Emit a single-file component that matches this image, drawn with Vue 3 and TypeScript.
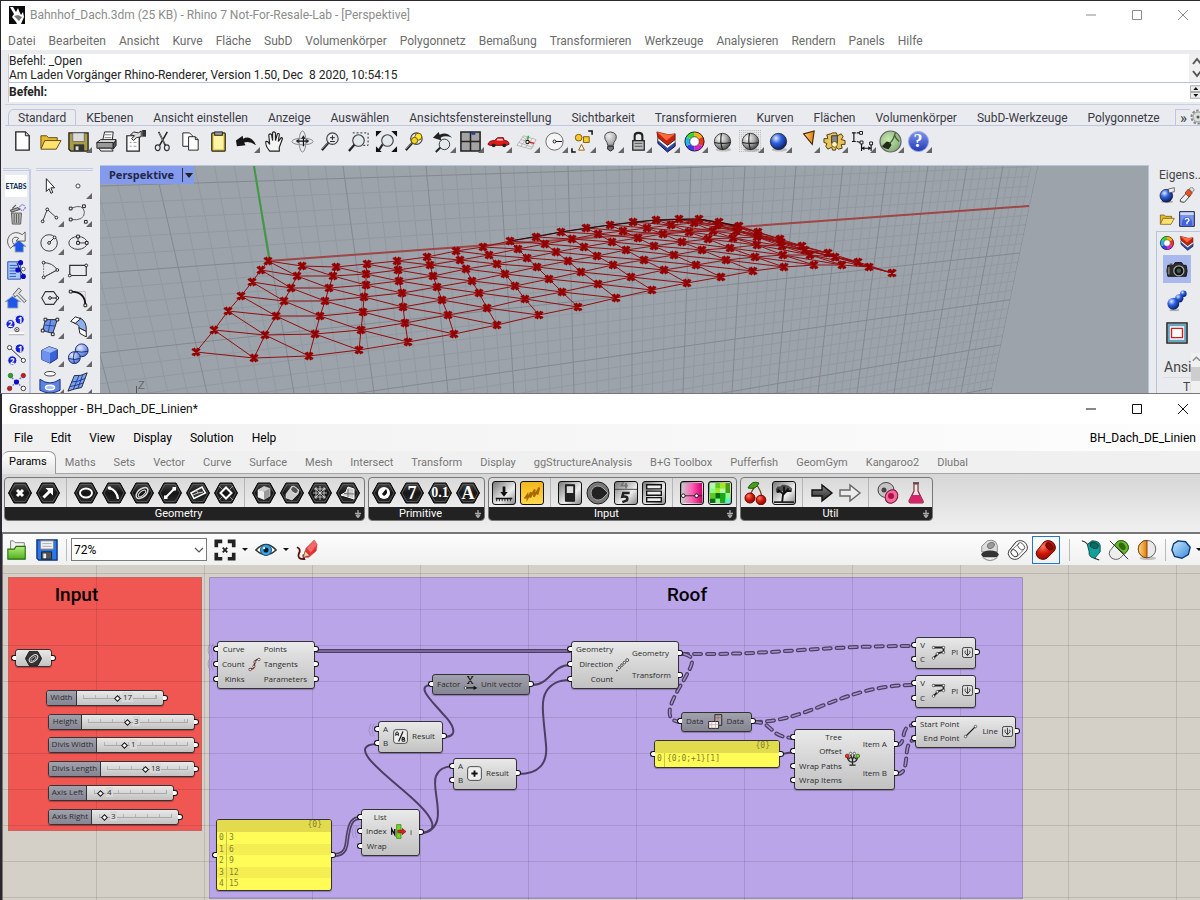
<script setup lang="ts">
import { ref } from 'vue'

type Tool = { id: string; label: string; fly?: boolean }
type Slider = { name: string; x: number; y: number; w: number; label: number; from: number; to: number; knob: number; value: string }
type GhNode = {
  id: string; x: number; y: number; w: number; h: number
  inputs: string[]; outputs: string[]; icon: string; dark?: boolean; graft?: boolean
}

const menus = ['Datei', 'Bearbeiten', 'Ansicht', 'Kurve', 'Fläche', 'SubD', 'Volumenkörper', 'Polygonnetz', 'Bemaßung', 'Transformieren', 'Werkzeuge', 'Analysieren', 'Rendern', 'Panels', 'Hilfe']
const rhinoTabs = ['Standard', 'KEbenen', 'Ansicht einstellen', 'Anzeige', 'Auswählen', 'Ansichtsfenstereinstellung', 'Sichtbarkeit', 'Transformieren', 'Kurven', 'Flächen', 'Volumenkörper', 'SubD-Werkzeuge', 'Polygonnetze']
const ghMenus = ['File', 'Edit', 'View', 'Display', 'Solution', 'Help']
const ghTabs = ['Params', 'Maths', 'Sets', 'Vector', 'Curve', 'Surface', 'Mesh', 'Intersect', 'Transform', 'Display', 'ggStructureAnalysis', 'B+G Toolbox', 'Pufferfish', 'GeomGym', 'Kangaroo2', 'Dlubal']
const command = ref('')
const zoom = ref('72%')

const glass = '<path d="M10 13L3 21" stroke="#222" stroke-width="2.4"/><path d="M9 13.500L3 20" stroke="#aaa" stroke-width=".8"/><circle cx="14" cy="9" r="6" fill="#e4e9ee" stroke="#444" stroke-width="1.2"/><path d="M10.500 8Q11.500 5 14.500 5" fill="none" stroke="#fff" stroke-width="1.200"/>'
const ball = (c: string) => `<ellipse cx="13" cy="20.500" rx="8" ry="2" fill="#0003"/><circle cx="12" cy="12" r="8.500" fill="url(#${c})" stroke="#222" stroke-width=".8"/>`
const tube = (a: string, b: string, s: string) => `<path d="M2 13L10 3Q15 0 20 4Q24 9 21 13L13 21Q8 24 3 20Q0 16 2 13Z" fill="${a}" stroke="${s}"/><ellipse cx="15.500" cy="8" rx="3" ry="4.500" transform="rotate(-42 15.500 8)" fill="${b}" stroke="${s}" stroke-width=".8"/>`

const art: Record<string, string> = {
  new: '<path d="M5 2H15L19 6V21H5Z" fill="#fdfdfd" stroke="#222" stroke-width="1.4"/><path d="M15 2V6H19" fill="#ccc" stroke="#222"/>',
  open: '<path d="M2 19V6H8L10 8H19V11" fill="#e8b72c" stroke="#5f4a10"/><path d="M2 20L6 11H23L18 20Z" fill="#ffe36e" stroke="#5f4a10"/>',
  save: '<path d="M2 3H22V22H4L2 20Z" fill="#a89c45" stroke="#222" stroke-width="1.400"/><path d="M6 3H18V12H6Z" fill="#dcdcdc" stroke="#555" stroke-width=".7"/><path d="M7 15H18V22H7Z" fill="#333"/><path d="M9 17H12V21H9Z" fill="#ddd"/>',
  print: '<path d="M8 11L10 2H19L18 11" fill="#fff" stroke="#222"/><path d="M10 5H17M10 8H17" stroke="#777"/><path d="M2 13L6 10H22L20 14H2Z" fill="#ddd" stroke="#222"/><path d="M2 13H19V19H2Z" fill="#999" stroke="#222"/><path d="M19 14L22 11V16L19 20Z" fill="#555" stroke="#222"/><path d="M4 19H17L19 22H6Z" fill="#eee" stroke="#222"/>',
  props: '<path d="M4 6H17V22H4Z" fill="#fafafa" stroke="#222" stroke-width="1.300"/><path d="M7 13H9M11 13H14M7 17H9M11 17H14" stroke="#999"/><path d="M8 5L11 2L16 3L19 1V7L14 8L11 11L9 9L12 6Z" fill="#ddd" stroke="#222"/><path d="M20 0H24V7H20Z" fill="#333"/>',
  cut: '<path d="M8 2L15 16M17 2L9 16" stroke="#222" stroke-width="1.600"/><path d="M8.500 3L14 14" stroke="#bbb" stroke-width=".6"/><ellipse cx="7" cy="18.500" rx="2.500" ry="3" fill="none" stroke="#333" stroke-width="1.200"/><ellipse cx="16.500" cy="18.500" rx="2.500" ry="3" fill="none" stroke="#333" stroke-width="1.200"/>',
  copy: '<path d="M4 3H11L14 6V17H4Z" fill="#fff" stroke="#222"/><path d="M10 7H17L20 10V21H10Z" fill="#fff" stroke="#222"/><path d="M17 7V10H20" fill="none" stroke="#222"/>',
  paste: '<rect x="5" y="3" width="14" height="19" rx="1" fill="#e8c93c" stroke="#222" stroke-width="1.300"/><path d="M7 6H17V20H7Z" fill="#fff3a8"/><rect x="8" y="2" width="8" height="3.500" fill="#999" stroke="#222"/>',
  undo: '<path d="M1 11L8 6L8.500 9Q17 5 22 16Q15 11 9.500 13L11 16L2 17Z" fill="#161616"/>',
  hand: '<path d="M7 22Q2 16 3 12Q5 11 7 15L6 5Q8 3 9 5L10 11V3Q11 1 13 3V11L15 4Q17 3 17 5L16 12L19 8Q21 8 20 10L17 18V22Z" fill="#f5f5f5" stroke="#222" stroke-width="1.200"/>',
  spin: '<ellipse cx="12" cy="12" rx="11" ry="3.500" fill="none" stroke="#888"/><ellipse cx="12" cy="12" rx="3.500" ry="11" fill="none" stroke="#888"/><path d="M7 11.500H17M13 7V17" stroke="#111" stroke-width="1.300"/><path d="M10.500 9H15L13 5.500ZM16 9V14L19 11.500ZM8 9V14L5 11.500Z" fill="#222"/>',
  zoomd: glass + '<path d="M11.500 8H16.500M14 5.500V10.500M11.500 12H16.500" stroke="#222"/>',
  zoomw: '<path d="M6 3H22V16H17" fill="none" stroke="#222" stroke-dasharray="2 2"/><path d="M8 15L2 22" stroke="#222" stroke-width="2.400"/><circle cx="12" cy="11" r="6" fill="#e4e9ee" stroke="#444" stroke-width="1.200"/>',
  zoome: '<path d="M8 15L4 21" stroke="#222" stroke-width="2.200"/><circle cx="13" cy="11" r="6" fill="#e4e9ee" stroke="#444" stroke-width="1.200"/><path d="M1 1H7L1 7ZM23 1H17L23 7ZM1 23V17L7 23ZM23 23H17L23 17Z" fill="#111"/>',
  zooms: glass + '<circle cx="16" cy="7" r="3.600" fill="#ffe435" stroke="#665a00"/><circle cx="12" cy="11" r="3.300" fill="#f5d51e" stroke="#665a00"/>',
  zoomu: '<path d="M10 18L5 23" stroke="#222" stroke-width="2"/><circle cx="14" cy="15" r="5.500" fill="#e4e9ee" stroke="#333"/><path d="M2 8L8 2L9 5Q16 1 22 8Q15 5 10 8L11 11Z" fill="#222"/>',
  four: '<path d="M2 2H22V22H2Z" fill="#a3a3a3" stroke="#222" stroke-width="1.600"/><path d="M12 2V22M2 12H22" stroke="#222" stroke-width="1.600"/><path d="M13 3H17V5H13Z" fill="#1b3fae"/>',
  car: '<path d="M1 15Q2 11 8 11L11 8H17L18 11Q23 11 23 15L20 16H3Z" fill="#e21919" stroke="#770909"/><path d="M11 9H16L17 11H10Z" fill="#ffd0d0"/><circle cx="7" cy="16" r="2" fill="#222"/><circle cx="18" cy="16" r="2" fill="#222"/>',
  cplane: '<path d="M2 16L9 6L22 10L17 20ZM4 13L18 18M6 10L20 14M6 17L13 7M11 18L18 9M8 7L20 17" fill="#eee" stroke="#aaa" stroke-width=".8"/><path d="M13 12L20 14" stroke="#d22" stroke-width="1.500"/><path d="M13 12L14 6" stroke="#2a2" stroke-width="1.500"/><path d="M11.500 11H14.500V14H11.500Z" fill="#fff" stroke="#111"/>',
  circ: '<circle cx="12" cy="12" r="9" fill="#f5f5f5" stroke="#666"/><path d="M12 12H20" stroke="#111"/><circle cx="12" cy="12" r="1.500" fill="#fff" stroke="#111"/>',
  sel: '<path d="M18 1H22V5M5 23H1V19" fill="none" stroke="#111" stroke-width="1.600"/><circle cx="8" cy="8" r="3.500" fill="#ffc92e" stroke="#7a5a00"/><path d="M13 7H19V13H13Z" fill="#ffc92e" stroke="#7a5a00"/><path d="M11 15L14 21H8Z" fill="#fff" stroke="#9a5a00"/>',
  bulb: '<path d="M9 16Q9 13 6.500 10Q4 3 12 2Q20 3 17.500 10Q15 13 15 16Z" fill="url(#bulbg)" stroke="#444"/><path d="M9 17H15V20L12 22L9 20Z" fill="#777" stroke="#222"/>',
  lock: '<path d="M8 11V6Q8 3 12 3Q16 3 16 6V11" fill="none" stroke="#222" stroke-width="2.200"/><path d="M6 11H18V21H6Z" fill="#bdbdbd" stroke="#222" stroke-width="1.300"/><path d="M8 14H16M8 17H16" stroke="#555"/>',
  layer: '<path d="M3 9L13 18L21 13V17L13 23L3 14Z" fill="#2747b7" stroke="#112"/><path d="M3 7L13 16L21 10V13L13 19L3 11Z" fill="#fff" stroke="#445" stroke-width=".7"/><path d="M2 2L14 5L21 4V10L13 16L3 8Z" fill="#c32410" stroke="#5b0f00" stroke-width=".8"/><path d="M2 2L14 5L21 4L12 11Z" fill="#ff6a3a"/>',
  wheel: '<g fill="none" stroke-width="5"><path d="M12 4.500A7.500 7.500 0 0 1 18.500 8.200" stroke="#ffb000"/><path d="M18.500 8.200A7.500 7.500 0 0 1 18.500 15.800" stroke="#f4321c"/><path d="M18.500 15.800A7.500 7.500 0 0 1 12 19.500" stroke="#e020d0"/><path d="M12 19.500A7.500 7.500 0 0 1 5.500 15.800" stroke="#3a3af0"/><path d="M5.500 15.800A7.500 7.500 0 0 1 5.500 8.200" stroke="#19b8e8"/><path d="M5.500 8.200A7.500 7.500 0 0 1 12 4.500" stroke="#3bd62b"/></g><circle cx="12" cy="12" r="10" fill="none" stroke="#222"/><circle cx="12" cy="12" r="5" fill="#fff" stroke="#333" stroke-width=".8"/>',
  ball: ball('silver') + '<path d="M3.500 13Q12 15 20.500 13M11 3.500Q9 12 12 20.500" stroke="#222" stroke-width="1.200" fill="none"/>',
  ballg: '<path d="M0 0H24V24H0Z" fill="url(#dots)"/>' + ball('silver') + '<path d="M3.500 13Q12 15 20.500 13M11 3.500Q9 12 12 20.500" stroke="#222" stroke-width="1.200" fill="none"/>',
  blue: ball('blueg'),
  cone: '<path d="M9 4L20 1L18 15Z" fill="url(#orange)" stroke="#4a2a00" stroke-width="1.200"/>',
  gear: '<path d="M10 3H14L15 6L19 4L21 7L19 10L23 11V15L19 15L20 19L16 20L14 18L13 21H10L9 18L5 20L3 17L4 14L1 13V9L5 9L4 5L8 4Z" fill="#e9c45a" stroke="#4f3b0a"/><path d="M9 6H15V14H9Z" fill="#888" stroke="#333"/><circle cx="12" cy="15" r="3" fill="#fff4c4" stroke="#6b5210"/>',
  dim: '<path d="M3 3V12M1 3H5M1 12H5M6 3H11M11 14V22M21 14V22M11 19H21M6 12L10 13" fill="none" stroke="#111" stroke-width="1.200"/><path d="M9 1.500H12V4.500H9ZM9.500 11.500H12.500V14.500H9.500ZM19.500 12.500H22.500V15.500H19.500Z" fill="#fff" stroke="#111"/><path d="M11 19L14 17V21ZM21 19L18 17V21Z" fill="#111"/>',
  hop: '<circle cx="12" cy="12" r="11" fill="url(#greeng)" stroke="#666" stroke-width="1.200"/><path d="M3 17L8 12L12 13L13 16L10 20L6 19Z" fill="#1d2b18"/><path d="M11 14Q15 11 17 3M16 5Q18 10 21 12" fill="none" stroke="#41623a" stroke-width="1.400"/>',
  help: '<circle cx="12" cy="12" r="10.500" fill="url(#helpg)" stroke="#9aa6e0"/>',
  etabs: '<path d="M0 0H24V24H0Z" fill="#fff"/>',
  trash: '<path d="M6 8L14 5L16 7L7 10ZM8 6L12 2" fill="#aaa" stroke="#555" stroke-width="1.200"/><path d="M7 11H18L17 23H8Z" fill="#bbb" stroke="#555"/><path d="M10 12V22M12.500 12V22M15 12V22" stroke="#555"/><circle cx="19" cy="5" r="3" fill="none" stroke="#33c" stroke-dasharray="1.500 1"/>',
  back: '<path d="M15 10L23 17H20V23H11V17H7Z" fill="#1e56e8" stroke="#9ab"/><path d="M19 4Q11 -1 5 5Q0 12 6 19L10 15Q6 10 10 7Q12 6 15 8L12 11H22V1Z" fill="#eee" stroke="#555"/>',
  doc: '<path d="M3 3H15L17 7V22H3Z" fill="#a9c8ff" stroke="#2646a5"/><path d="M5 7H13M5 10H13M5 13H13M5 16H12M5 19H12" stroke="#2a50b8"/><path d="M13 4L16 12L20 18" stroke="#222"/><circle cx="17" cy="4" r="2.800" fill="#0a0ac8"/><circle cx="14" cy="12" r="2.800" fill="#0a0ac8"/><circle cx="20" cy="19" r="2.800" fill="#0a0ac8"/><circle cx="20" cy="11" r="2" fill="#fff" stroke="#555"/>',
  build: '<path d="M8 10L17 16H14V23H3V16H0Z" fill="#1e56e8" stroke="#9ab"/><path d="M9 8L15 1L18 4L15 7L23 15L21 17L13 9L11 11Z" fill="#ddd" stroke="#555"/>',
  seq: '<circle cx="16" cy="5" r="5" fill="#1420d0" stroke="#fff"/><circle cx="6" cy="10" r="5" fill="#1420d0" stroke="#fff"/><circle cx="13" cy="16" r="2.300" fill="#fff" stroke="#333"/><circle cx="13" cy="16" r=".8"/><path d="M4 20H21" stroke="#fff" stroke-width="2"/><path d="M4 21.500H21" stroke="#aaa"/>',
  seq2: '<path d="M4 4L20 19" stroke="#222"/><circle cx="5" cy="5" r="2.300" fill="#fff" stroke="#333"/><circle cx="20" cy="19" r="2.300" fill="#fff" stroke="#333"/><circle cx="16" cy="6" r="5" fill="#1420d0" stroke="#fff"/><circle cx="8" cy="19" r="5" fill="#1420d0" stroke="#fff"/>',
  nodes: '<path d="M5 5L20 19M20 5L5 19" stroke="#6a7ad8" stroke-dasharray="2 1.500" stroke-width="1.500"/><circle cx="12.500" cy="12" r="2.800" fill="#0a0ac8"/><circle cx="6" cy="5" r="2.500" fill="#1cae1c" stroke="#333" stroke-width=".6"/><circle cx="20" cy="5" r="2.500" fill="#d11" stroke="#333" stroke-width=".6"/><circle cx="5" cy="19" r="2.500" fill="#d11" stroke="#333" stroke-width=".6"/><circle cx="20" cy="19" r="2.500" fill="#fff" stroke="#333"/>',
  arrow: '<path d="M8 4L17 14L13 14L15 19L13 20L11 15L8 18Z" fill="#fff" stroke="#111"/>',
  point: '<circle cx="12" cy="12" r="2.200" fill="#fff" stroke="#333"/>',
  pline: '<path d="M4 20L9 7L19 16" fill="none" stroke="#333"/><g fill="#fff" stroke="#111"><circle cx="4" cy="20" r="1.500"/><circle cx="9" cy="7" r="1.500"/><circle cx="19" cy="16" r="1.500"/></g>',
  curve: '<path d="M4 6Q18 0 19 10Q19 20 4 18" fill="none" stroke="#555"/><g fill="#fff" stroke="#111"><path d="M2.500 4.500H5.500V7.500H2.500ZM2.500 16.500H5.500V19.500H2.500ZM17 2H20V5H17ZM19 19H22V22H19Z"/></g>',
  circle2: '<circle cx="11" cy="13" r="9" fill="none" stroke="#333"/><path d="M11 13L17 7" stroke="#111"/><g fill="#fff" stroke="#111"><circle cx="11" cy="13" r="1.500"/><circle cx="17" cy="7" r="1.500"/></g>',
  ellipse: '<ellipse cx="12" cy="13" rx="10" ry="7" fill="none" stroke="#333"/><path d="M12 6V13H22" fill="none" stroke="#333"/><g fill="#fff" stroke="#111"><path d="M10.500 4.500H13.500V7.500H10.500ZM10.500 11.500H13.500V14.500H10.500ZM20 11.500H23V14.500H20Z"/></g>',
  arc: '<path d="M5 4V20M5 20L19 12" stroke="#777" stroke-dasharray="2 1" fill="none"/><path d="M5 4Q15 4 20 12L5 20" fill="none" stroke="#333"/><g fill="#fff" stroke="#111"><circle cx="5" cy="4" r="1.500"/><circle cx="20" cy="12" r="1.500"/><circle cx="5" cy="20" r="1.500"/></g>',
  rect: '<path d="M3 7H21V18H3Z" fill="none" stroke="#333" stroke-width="1.300"/><circle cx="21" cy="7" r="1.500" fill="#fff" stroke="#111"/><circle cx="3" cy="18" r="1.500" fill="#fff" stroke="#111"/>',
  hex: '<path d="M7 5H16L21 12L16 19H7L3 12Z" fill="none" stroke="#333" stroke-width="1.200"/><path d="M12 12H20" stroke="#111"/><circle cx="12" cy="12" r="1.500" fill="#fff" stroke="#111"/><circle cx="20" cy="12" r="1.500" fill="#fff" stroke="#111"/>',
  fillet: '<path d="M4 5H20V21" fill="none" stroke="#bbb"/><path d="M4 5Q20 5 20 20" fill="none" stroke="#111" stroke-width="2"/><g fill="#fff" stroke="#111"><path d="M2.500 3.500H5.500V6.500H2.500ZM18.500 18.500H21.500V21.500H18.500Z"/></g>',
  srf: '<path d="M7 5H20L15 20L4 17Z" fill="#6f93e8" stroke="#222"/><path d="M6 11L18 12M13 5L10 19" stroke="#26418f"/><g fill="#fff" stroke="#111"><path d="M5.500 3.500H8.500V6.500H5.500ZM18.500 3.500H21.500V6.500H18.500ZM2.500 15.500H5.500V18.500H2.500ZM13.500 19.500H16.500V22.500H13.500Z"/></g>',
  patch: '<path d="M8 9L14 3Q22 7 21 18L13 14Q14 11 8 9Z" fill="#8fb0f0" stroke="#222"/><path d="M4 7L9 2L15 4L9 9Z" fill="#fff" stroke="#111"/><path d="M13 14L21 18V24L14 20Z" fill="#fff" stroke="#111"/>',
  box: '<path d="M3 8L11 4L20 7V17L12 22L3 18Z" fill="#3c62d8" stroke="#16276d"/><path d="M3 8L11 4L20 7L12 11Z" fill="#9ab7f8"/><path d="M12 11V22L3 18V8Z" fill="#6e92ee"/>',
  balls: '<circle cx="16" cy="8" r="7" fill="url(#bluel)" stroke="#16276d"/><circle cx="8" cy="16" r="6.500" fill="url(#bluel)" stroke="#16276d"/><path d="M2 17Q8 19 14 17M8 9.500Q6 16 8 22M9 9Q16 11 23 9" fill="none" stroke="#16276d"/>',
  sweep: '<ellipse cx="12" cy="3" rx="6" ry="2.500" fill="#fff" stroke="#333"/><path d="M1 9Q12 17 23 9V21Q12 27 1 21Z" fill="#5b83e6" stroke="#16276d"/><ellipse cx="12" cy="18" rx="5" ry="2.500" fill="#aebff5" stroke="#fff" stroke-width="1.500"/>',
  mesh: '<path d="M8 5Q15 6 22 2L16 18Q9 19 1 22Z" fill="#7da2ef" stroke="#222"/><path d="M5 12Q12 12 20 8M3 17Q10 16 18 13M13 5L7 20M17 4L12 19" fill="none" stroke="#1d3687"/>',
  matball: '<ellipse cx="12" cy="22" rx="9" ry="2" fill="#0005"/><circle cx="11" cy="13" r="9.500" fill="url(#blueg)" stroke="#112"/><path d="M14 3L23 1V7L15 9Z" fill="#eee" stroke="#333"/>',
  brush: '<path d="M2 19L12 8L17 13L8 23L2 22Z" fill="#eee" stroke="#333" stroke-width="1.400"/><path d="M9 9L14 3L20 9L15 15Z" fill="#e8531c" stroke="#622"/><path d="M15 3L19 0L23 4L20 8Z" fill="#ddd" stroke="#555"/>',
  qpage: '<path d="M1 1H23V23H1Z" fill="#7b93ea" stroke="#224" stroke-width="1.500"/><path d="M2 2H22V6H2Z" fill="#cfd8ff"/><path d="M4 22Q4 9 12 9Q20 9 20 22" fill="#3f63e0"/><path d="M9 13Q10 11 12 11Q15 11 15 14Q14 16 12 17V20" fill="none" stroke="#fff" stroke-width="2"/>',
  camera: '<path d="M2 8H8L10 5H17L19 8H22Q24 14 22 20H2Q0 14 2 8Z" fill="#2b2b2b" stroke="#111"/><path d="M4 6H7V8H4Z" fill="#555"/><circle cx="14" cy="14" r="5.500" fill="#111" stroke="#aaa" stroke-width="1.300"/><circle cx="14" cy="14" r="2.500" fill="#3b5b4c"/><path d="M3 10V18" stroke="#777" stroke-width="2"/>',
  chain: '<path d="M4 22H14" stroke="#0004" stroke-width="2"/><circle cx="19" cy="4" r="3.500" fill="url(#blueg)"/><circle cx="14.500" cy="9" r="4.500" fill="url(#blueg)"/><circle cx="8" cy="15" r="6.500" fill="url(#blueg)"/>',
  frame: '<path d="M1 1H23V23H1Z" fill="#999" stroke="#222" stroke-width="1.500"/><path d="M3.500 4H20.500V20H3.500Z" fill="#fff" stroke="#35b6e8" stroke-width="1.300"/><path d="M6 7H18V17H6Z" fill="#fff" stroke="#e01818" stroke-width="1.500"/>',
  // Grasshopper hexagon parameters
  x: '<path d="M9 9L15 15M15 9L9 15" stroke="#fff" stroke-width="3"/>',
  vec: '<path d="M7.500 16.500L14 10" stroke="#fff" stroke-width="3"/><path d="M9.500 7H17V14.500Z" fill="#fff"/>',
  oval: '<ellipse cx="12" cy="12" rx="6" ry="4.500" fill="none" stroke="#fff" stroke-width="2"/>',
  arch: '<path d="M7 7Q15 9 16 18" fill="none" stroke="#fff" stroke-width="2.200"/><circle cx="7.500" cy="7" r="1.800" fill="#fff"/>',
  spiral: '<ellipse cx="12" cy="12" rx="7" ry="4" transform="rotate(-40 12 12)" fill="none" stroke="#ddd" stroke-width="1.500"/><ellipse cx="12" cy="12.500" rx="4.500" ry="2" transform="rotate(-40 12 12.500)" fill="none" stroke="#ddd"/>',
  ln: '<path d="M8 16L16 8" stroke="#fff" stroke-width="2"/><path d="M6 14.500H9.500V18H6ZM14.500 6H18V9.500H14.500Z" fill="#fff"/>',
  pln: '<path d="M5 12L16 6L19.500 12L8 17.500Z" fill="#333" stroke="#fff" stroke-width="1.500"/><path d="M7 14L12 12L10 9M12 12L17 11" stroke="#ccc" fill="none"/>',
  dia: '<path d="M12 6.500L17.500 12L12 17.500L6.500 12Z" fill="none" stroke="#fff" stroke-width="2"/><path d="M5 5L19 19M19 5L5 19" stroke="#aaa" stroke-width=".8" stroke-dasharray="5 10"/>',
  cube: '<path d="M6 9L12 5.500L18 7.500V15L12 18.500L6 16Z" fill="#999" stroke="#ccc" stroke-width=".7"/><path d="M6 9L12 10.500V18.500L6 16Z" fill="#eee"/><path d="M6 9L12 5.500L18 7.500L12 10.500Z" fill="#ccc"/>',
  brep: '<path d="M6 13L12 5L19 9L18 13L12 19L6 17Z" fill="#ccc" stroke="#eee" stroke-width=".6"/><ellipse cx="14.500" cy="9" rx="4.200" ry="3" transform="rotate(40 14.500 9)" fill="#555" stroke="#fff" stroke-width=".8"/>',
  msh: '<path d="M6 8H18M5 12H19M6 16H18M8 6V18M12 5V19M16 6V18M7 7L17 17M17 7L7 17" stroke="#ddd" stroke-width=".8"/>',
  twist: '<path d="M12 6L18 8V18L12 16L5 14L10 11Z" fill="#ccc" stroke="#fff"/><path d="M12 8V16M8 12.500L18 13" stroke="#555" stroke-width=".8"/>',
  yin: '<circle cx="12" cy="12" r="6" fill="#fff"/><path d="M10 13L14 8Q17 12 12 15Z" fill="#111"/>',
  // Grasshopper input and util
  slider: '<path d="M12 5V13" stroke="#111" stroke-width="3"/><path d="M8 11H16L12 16Z" fill="#111"/><path d="M3 18H21" stroke="#111" stroke-width="1.500"/><path d="M4 21V18M7 21V18M10 21V18M13 21V18M16 21V18M19 21V18" stroke="#111"/>',
  graph: '<path d="M4 18L7 14L7 18L11 11L10 17L15 8L14 16L20 6L18 14" fill="none" stroke="#a86a00" stroke-width="2"/>',
  toggle: '<path d="M7 3H17V21H7Z" fill="#222" stroke="#111"/><path d="M8.500 4.500H15.500V12H8.500Z" fill="#ddd"/>',
  knob: '<circle cx="12" cy="12" r="11" fill="#777" stroke="#222"/><path d="M12 5A7 7 0 1 0 17 17L22 12L17 7Q15 5 12 5Z" fill="#222" stroke="#aaa"/>',
  digits: '<path d="M9 0L7 4H14M12 1V7" fill="none" stroke="#777" stroke-width="2"/><path d="M0 8H24" stroke="#444"/><path d="M16 12H9L8 16Q15 15 13 20L8 22" fill="none" stroke="#222" stroke-width="2.800"/>',
  list: '<path d="M4 3H20V7.500H4ZM4 10H20V14.500H4ZM4 17H20V21.500H4Z" fill="#eee" stroke="#111" stroke-width="1.500"/>',
  grad: '<path d="M1 1H23V23H1Z" fill="url(#pink)"/><path d="M1 15H23" stroke="#222"/><circle cx="2.500" cy="15" r="2" fill="#fff" stroke="#111"/><circle cx="17" cy="15" r="2" fill="#fff" stroke="#111"/>',
  pix: '<path d="M1 1H23V23H1Z" fill="#8f8"/><path d="M1 1H7V7H1ZM12 7H18V12H12Z" fill="#b6f7b0"/><path d="M7 1H12V7H7ZM1 12H7V18H1Z" fill="#5ecb20"/><path d="M12 1H18V7H12ZM7 7H12V12H7Z" fill="#a6e820"/><path d="M18 1H23V12H18Z" fill="#4a9d12"/><path d="M7 12H12V18H7ZM1 18H7V23H1Z" fill="#0a6c10"/><path d="M12 12H18V23H12Z" fill="#19a819"/><path d="M18 18H23V23H18Z" fill="#58f5c8"/>',
  cherry: '<path d="M6 15Q8 8 13 4Q17 10 18 16" fill="none" stroke="#6b4a20" stroke-width="1.300"/><path d="M4 7Q8 -1 15 2Q12 9 4 7Z" fill="#46a01c" stroke="#1f5a08"/><circle cx="6" cy="17" r="5" fill="url(#redg)" stroke="#700"/><circle cx="17" cy="19" r="4.800" fill="url(#redg)" stroke="#700"/>',
  tree: '<path d="M10 22L11 13L5 8M11 14L17 7M12 13V5M8 10L4 11M15 10L20 10" fill="none" stroke="#111" stroke-width="2"/><path d="M3 8L5 5L8 5L10 3L13 3L17 4L21 7L20 11L17 10L14 12L10 10L6 12L4 11Z" fill="#111" opacity=".65"/><path d="M1 21H23V23H1Z" fill="#222"/>',
  arrD: '<path d="M2 9H12V4L22 12L12 20V15H2Z" fill="url(#darkg)" stroke="#111" stroke-width="1.400"/>',
  arrL: '<path d="M2 9H12V4L22 12L12 20V15H2Z" fill="#ececec" stroke="#666" stroke-width="1.400"/>',
  mix: '<ellipse cx="10" cy="9" rx="8" ry="7.500" fill="#c4c4c4" stroke="#444"/><circle cx="8" cy="9" r="2.500" fill="#444"/><ellipse cx="15.500" cy="15.500" rx="6" ry="7" transform="rotate(35 15.500 15.500)" fill="#f06a9c" stroke="#7a1238"/><circle cx="15" cy="15" r="3" fill="#b01048"/>',
  flask: '<path d="M10 3V10L5 20Q5 22 8 22H17Q20 22 19 20L14 10V3Z" fill="#f8e3ec" stroke="#733" stroke-width="1.200"/><path d="M8 14H16L19 20Q19 22 17 22H8Q5 22 5 20Z" fill="#d8246c"/><path d="M9 2H15" stroke="#433" stroke-width="1.500"/>',
  // Grasshopper canvas toolbar
  gopen: '<path d="M5 10V2H8L10 4H20V12H5Z" fill="#f2f2f2" stroke="#777"/><path d="M2 11H9L11 8H21V22H2Z" fill="url(#greenf)" stroke="#2a6b12" stroke-width="1.200"/>',
  gsave: '<path d="M1 1H23V23H3L1 21Z" fill="#2a78e8" stroke="#0a2c78" stroke-width="1.400"/><path d="M5 2H19V11H5Z" fill="#f3f3f3" stroke="#888"/><path d="M7 5H17M7 8H17" stroke="#aaa"/><path d="M6 14H17V22H6Z" fill="#555" stroke="#123"/><path d="M8 16H11V21H8Z" fill="#eee"/>',
  gext: '<path d="M2.500 9V2.500H9M15 2.500H21.500V9M21.500 15V21.500H15M9 21.500H2.500V15" fill="none" stroke="#222" stroke-width="4"/><path d="M9.500 9.500L14.500 14.500M14.500 9.500L9.500 14.500" stroke="#222" stroke-width="2"/>',
  eye: '<path d="M1 12Q12 0 23 12Q12 22 1 12Z" fill="#fff" stroke="#333" stroke-width="1.800"/><circle cx="12" cy="12" r="6" fill="#3ea4e0" stroke="#0d4a78"/><circle cx="12" cy="12" r="2.800" fill="#051c30"/><circle cx="10" cy="10" r="1.200" fill="#fff"/>',
  sketch: '<path d="M1 9Q6 11 3 16Q1 22 9 22Q8 19 8 17" fill="none" stroke="#551010" stroke-width="2"/><path d="M8 20L11 10L20 1L23 6L22 13L14 20Z" fill="#e23131" stroke="#a44" stroke-width=".6"/><path d="M8 20L10 13L15 18Z" fill="#f6cfa0" stroke="#733" stroke-width=".6"/><path d="M20 1L23 6L16 15L12 10Z" fill="#ff8d8d" opacity=".6"/>',
  noview: '<path d="M3 14V8L9 2Q14 0 18 3L20 7V14Z" fill="#ddd" stroke="#888"/><ellipse cx="13" cy="7" rx="4" ry="3" transform="rotate(-30 13 7)" fill="#999" stroke="#777"/><ellipse cx="12" cy="17" rx="9.500" ry="4.500" fill="#333"/><path d="M4 20Q12 27 20 20" stroke="#999" fill="#eee" stroke-width="1.200"/>',
  wire: tube('#fafafa', '#fff', '#333') + '<ellipse cx="8" cy="15.500" rx="3" ry="4.500" transform="rotate(-42 8 15.500)" fill="none" stroke="#333"/><path d="M2 13L10 3M13 21L21 13M5 12L13 5M11 19L18 12" stroke="#555" stroke-width=".8"/>',
  red: tube('url(#redg)', '#8a0c06', '#5a0600'),
  teal: '<path d="M2 2Q9 4 10 10Q10 20 21 23" fill="none" stroke="#222" stroke-width="1.200"/><path d="M8 6L13 2Q21 2 22 7L22 14L16 21Q9 20 10 14Z" fill="#13a09a" stroke="#0a4a48"/><ellipse cx="15.500" cy="7" rx="4.500" ry="3.200" transform="rotate(20 15.500 7)" fill="#0a6a66" stroke="#043"/>',
  greent: tube('#eee', '#2f6a10', '#555') + '<path d="M7 7L10 3Q15 0 20 4Q24 9 21 13L18 16.500Z" fill="#67b82a" stroke="#2a5a0c"/><ellipse cx="15.500" cy="8" rx="3" ry="4.500" transform="rotate(-42 15.500 8)" fill="#2f6a10"/><path d="M2 2L22 22" stroke="#222"/>',
  halfb: '<ellipse cx="13" cy="21" rx="9" ry="2" fill="#0003"/><circle cx="12" cy="11" r="9.500" fill="#e9e9e9" stroke="#555"/><path d="M12 1.500A9.500 9.500 0 0 0 12 20.500Z" fill="url(#orange)" stroke="#843a00"/>',
  octa: '<path d="M9 2L17 3L22 9L20 17L13 21L5 19L2 12L4 5Z" fill="url(#sky)" stroke="#123a78" stroke-width="1.500"/>',
  // component glyphs
  divide: '<path d="M4 20Q13 20 12 12Q11 4 20 3" fill="none" stroke="#c01818" stroke-width="2"/><path d="M3 19L8 18M10 14L13 10M14 5L20 3" stroke="#333" stroke-width="1.500"/><g fill="#fff" stroke="#222"><circle cx="5" cy="20" r="2"/><circle cx="11" cy="15" r="1.800"/><circle cx="12.500" cy="8" r="1.800"/><circle cx="19" cy="4" r="2"/></g>',
  array: '<g fill="#fff" stroke="#222" stroke-width="1.300"><circle cx="7" cy="17" r="2"/><circle cx="11" cy="13" r="2"/><circle cx="15" cy="9" r="2"/><circle cx="19.500" cy="5" r="2.300"/></g><path d="M2 20L5 22L2 23Z" fill="#111"/>',
  unitx: '<path d="M4 19H18" stroke="#111" stroke-width="2"/><path d="M17 15.500L23 19L17 22.500Z" fill="#111"/><circle cx="4" cy="19" r="2" fill="#fff" stroke="#111"/><path d="M8 1L15 12M15 1L8 12M6.500 1H10M13.500 1H16.500M6.500 12H10M13.500 12H16.500" stroke="#222" stroke-width="1.800"/>',
  slash: '<rect x="1" y="1" width="22" height="22" rx="4" fill="#eee" stroke="#444" stroke-width="1.500"/><path d="M16 4L9 20" stroke="#111" stroke-width="2"/><path d="M4.500 11V6L6.500 4.500L8.500 6V11M4.500 8.500H8.500M14.500 13.500H18L18.500 16L14.500 16.500V13.500M14.500 16.500H18.500L19 19.500H14.500Z" fill="none" stroke="#111" stroke-width="1.500"/>',
  plus: '<rect x="1" y="1" width="22" height="22" rx="4" fill="#eee" stroke="#444" stroke-width="1.500"/><path d="M12 7V17M7 12H17" stroke="#111" stroke-width="3"/>',
  item: '<path d="M1 17V8L6 17V8" fill="none" stroke="#111" stroke-width="2.200"/><path d="M9 1H16V23H9Z" fill="#74d81c" stroke="#2b6b0a"/><path d="M11 10H18V7L24 12L18 17V14H11Z" fill="#e21d1d" stroke="#711"/>',
  flip: '<path d="M11 1H22V18H11Z" fill="#aaa" stroke="#222" stroke-width="1.500"/><path d="M16 1V12M11 6H22" stroke="#a55"/><path d="M1 12H17V23H1Z" fill="#f5f5f5" stroke="#222" stroke-width="1.500"/><path d="M1 17H17M6 12V23M12 12V23" stroke="#c99"/>',
  rtree: '<path d="M12 23V14M12 18Q4 17 4 9M12 18Q20 17 20 9M12 14L9 6M12 14L15 6M7 22.500H17M6 13L9 10M18 13L15 10" fill="none" stroke="#222" stroke-width="2"/><circle cx="3.500" cy="8" r="3" fill="#e33b1a" stroke="#600"/><circle cx="20.500" cy="8" r="3" fill="#66dd20" stroke="#250"/><circle cx="9" cy="4" r="2" fill="#fff" stroke="#222"/><circle cx="15" cy="4" r="2" fill="#fff" stroke="#222"/>',
  poly: '<path d="M4 4H20V11L12 13L4 21" fill="none" stroke="#222" stroke-width="3"/><g fill="#fff" stroke="#222"><circle cx="4" cy="4" r="2"/><circle cx="20" cy="4" r="2"/><circle cx="20" cy="12" r="2"/><circle cx="10" cy="14" r="2"/><circle cx="4" cy="21" r="2"/></g>',
  line2: '<path d="M4 20L20 4" stroke="#222" stroke-width="1.800"/><circle cx="4" cy="20" r="2" fill="#fff" stroke="#222"/><circle cx="20" cy="4" r="2" fill="#fff" stroke="#222"/>',
}

const tools: Tool[] = [
  { id: 'new', label: 'Neu' }, { id: 'open', label: 'Öffnen' }, { id: 'save', label: 'Speichern', fly: true }, { id: 'print', label: 'Drucken' },
  { id: 'props', label: 'Dokumenteigenschaften' }, { id: 'cut', label: 'Ausschneiden' }, { id: 'copy', label: 'Kopieren' }, { id: 'paste', label: 'Einfügen' },
  { id: 'undo', label: 'Rückgängig', fly: true }, { id: 'hand', label: 'Verschieben' }, { id: 'spin', label: 'Ansicht drehen' }, { id: 'zoomd', label: 'Zoom dynamisch' },
  { id: 'zoomw', label: 'Zoom Fenster' }, { id: 'zoome', label: 'Zoom Grenzen' }, { id: 'zooms', label: 'Zoom Auswahl' }, { id: 'zoomu', label: 'Ansicht zurück', fly: true },
  { id: 'four', label: 'Vier Ansichten', fly: true }, { id: 'car', label: 'Ansicht rechts', fly: true }, { id: 'cplane', label: 'Konstruktionsebene', fly: true },
  { id: 'circ', label: 'Objektfang', fly: true }, { id: 'sel', label: 'Auswählen', fly: true }, { id: 'bulb', label: 'Ausblenden', fly: true }, { id: 'lock', label: 'Sperren', fly: true },
  { id: 'layer', label: 'Ebenen', fly: true }, { id: 'wheel', label: 'Eigenschaften', fly: true }, { id: 'ball', label: 'Schattiert' }, { id: 'ballg', label: 'Gerendert', fly: true },
  { id: 'blue', label: 'Rendern', fly: true }, { id: 'cone', label: 'Licht', fly: true }, { id: 'gear', label: 'Optionen', fly: true }, { id: 'dim', label: 'Bemaßung', fly: true },
  { id: 'hop', label: 'Grasshopper', fly: true }, { id: 'help', label: 'Hilfe', fly: true },
]
const sideA = ['etabs', 'trash', 'back', 'doc', 'build', 'seq', 'seq2', 'nodes']
const sideB = ['arrow', 'point', 'pline', 'curve', 'circle2', 'ellipse', 'arc', 'rect', 'hex', 'fillet', 'srf', 'patch', 'box', 'balls', 'sweep', 'mesh']

const ribbon = [
  { name: 'Geometry', groups: [['x', 'vec'], ['oval', 'arch', 'spiral', 'ln', 'pln', 'dia'], ['cube', 'brep', 'msh', 'twist']], kind: 'hexa' },
  { name: 'Primitive', groups: [['yin', '7', '0.1', 'A']], kind: 'hexa' },
  { name: 'Input', groups: [['slider', 'graph'], ['toggle', 'knob', 'digits', 'list'], ['grad', 'pix']], kind: 'tile' },
  { name: 'Util', groups: [['cherry', 'tree'], ['arrD', 'arrL'], ['mix', 'flask']], kind: 'bare' },
]
const tiled = ['slider', 'graph', 'toggle', 'digits', 'list', 'grad', 'pix', 'tree']

// ---- perspective viewport ----
const lerp = (a: number, b: number, t: number) => a + (b - a) * t
const tops = [50, 155, 254, 343, 426, 500, 568, 632, 691, 745, 796, 843, 887, 928, 967, 1003, 1038]
const bots = [110, 207, 294, 374, 448, 514, 574, 632, 683, 732, 777, 818, 857, 894, 928, 961, 991]
const lefts = [95, 186, 273, 353, 430, 501, 560, 612]
const rights = [108, 157, 206, 252, 297, 340, 381, 420]
let minor = ''
let major = ''
for (let i = 0; i < tops.length; i++) {
  major += `M${tops[i]} 166L${bots[i]} 393`
  if (i + 1 < tops.length) for (let k = 1; k < 5; k++) minor += `M${lerp(tops[i], tops[i + 1], k / 5)} 166L${lerp(bots[i], bots[i + 1], k / 5)} 393`
}
for (let i = 0; i < lefts.length; i++) {
  major += `M100 ${lefts[i]}L1029 ${rights[i]}`
  if (i + 1 < lefts.length) for (let k = 1; k < 5; k++) minor += `M100 ${lerp(lefts[i], lefts[i + 1], k / 5)}L1029 ${lerp(rights[i], rights[i + 1], k / 5)}`
}
const roof: number[][] = [
  [268, 261, 261, 270, 252, 282, 241, 296, 228, 311, 214, 330, 196, 352],
  [302, 266, 297, 276, 291, 288, 284, 301, 276, 316, 265, 335, 254, 358],
  [336, 267, 333, 276, 329, 288, 325, 301, 320, 316, 315, 334, 309, 356],
  [367, 264, 366, 274, 366, 285, 364, 297, 363, 312, 361, 330, 359, 350],
  [397, 261, 398, 270, 399, 281, 402, 293, 403, 307, 405, 323, 408, 342],
  [427, 257, 430, 265, 433, 276, 437, 287, 442, 300, 448, 315, 454, 334],
  [456, 251, 460, 260, 466, 269, 472, 281, 479, 293, 487, 308, 497, 325],
  [483, 247, 489, 255, 497, 264, 505, 274, 515, 286, 525, 299, 539, 315],
  [510, 241, 518, 249, 527, 258, 537, 267, 549, 279, 562, 292, 578, 307],
  [536, 237, 545, 244, 556, 252, 568, 261, 581, 272, 598, 284, 616, 298],
  [561, 232, 572, 239, 584, 247, 597, 256, 613, 265, 631, 277, 652, 290],
  [586, 228, 598, 234, 612, 242, 626, 250, 644, 260, 664, 270, 687, 283],
  [610, 225, 623, 231, 638, 238, 654, 246, 674, 255, 696, 265, 721, 277],
  [633, 222, 647, 228, 663, 234, 682, 242, 702, 250, 726, 260, 753, 271],
  [656, 220, 671, 225, 689, 232, 708, 239, 730, 248, 755, 257, 784, 267],
  [679, 219, 694, 223, 713, 231, 733, 238, 757, 245, 783, 255, 814, 265],
  [699, 219, 717, 225, 736, 231, 757, 237, 782, 246, 810, 255, 842, 265],
  [719, 222, 738, 227, 758, 235, 781, 242, 805, 250, 835, 257, 869, 267],
  [739, 226, 758, 232, 780, 239, 802, 246, 828, 253, 858, 262, 892, 273],
]
let edges = ''
let marks = ''
for (let i = 0; i < roof.length; i++) {
  for (let j = 0; j < 7; j++) {
    const at = (a: number, b: number) => `${roof[a][b * 2]} ${roof[a][b * 2 + 1]}`
    const [x, y] = [roof[i][j * 2], roof[i][j * 2 + 1]]
    marks += `M${x - 4} ${y - 3}l8 6m0 -6l-8 6M${x - 2} ${y - 4}l4 8m0 -8l-4 8`
    if (j < 6) edges += `M${at(i, j)}L${at(i, j + 1)}`
    if (i < 18) edges += `M${at(i, j)}L${at(i + 1, j)}`
    if (i < 18 && j < 6) edges += `M${at(i, j)}L${at(i + 1, j + 1)}`
  }
}

// ---- Grasshopper canvas ----
const origin = { x: 2, y: 565 }
const place = (n: { x: number; y: number; w: number; h: number }) => ({
  left: n.x - origin.x + 'px', top: n.y - origin.y + 'px', width: n.w + 'px', height: n.h + 'px',
})
const sliders: Slider[] = [
  { name: 'Width', x: 46, y: 690, w: 118, label: 30, from: 83, to: 157, knob: 117, value: '17' },
  { name: 'Height', x: 48, y: 714, w: 147, label: 33, from: 88, to: 188, knob: 128, value: '3' },
  { name: 'Divis Width', x: 48, y: 737, w: 147, label: 48, from: 104, to: 188, knob: 125, value: '1' },
  { name: 'Divis Length', x: 48, y: 761, w: 147, label: 52, from: 107, to: 188, knob: 145, value: '18' },
  { name: 'Axis Left', x: 48, y: 785, w: 126, label: 38, from: 94, to: 167, knob: 101, value: '4' },
  { name: 'Axis Right', x: 48, y: 809, w: 131, label: 43, from: 99, to: 172, knob: 105, value: '3' },
]
const nodes: GhNode[] = [
  { id: 'divide', x: 217, y: 641, w: 98, h: 48, inputs: ['Curve', 'Count', 'Kinks'], outputs: ['Points', 'Tangents', 'Parameters'], icon: 'divide' },
  { id: 'array', x: 571, y: 641, w: 108, h: 48, inputs: ['Geometry', 'Direction', 'Count'], outputs: ['Geometry', 'Transform'], icon: 'array' },
  { id: 'unit', x: 432, y: 674, w: 98, h: 21, inputs: ['Factor'], outputs: ['Unit vector'], icon: 'unitx', dark: true },
  { id: 'div', x: 378, y: 721, w: 65, h: 32, inputs: ['A', 'B'], outputs: ['Result'], icon: 'slash' },
  { id: 'add', x: 453, y: 758, w: 64, h: 32, inputs: ['A', 'B'], outputs: ['Result'], icon: 'plus' },
  { id: 'item', x: 361, y: 809, w: 59, h: 47, inputs: ['List', 'Index', 'Wrap'], outputs: ['i'], icon: 'item' },
  { id: 'flip', x: 681, y: 712, w: 71, h: 20, inputs: ['Data'], outputs: ['Data'], icon: 'flip', dark: true },
  { id: 'rel', x: 794, y: 729, w: 101, h: 61, inputs: ['Tree', 'Offset', 'Wrap Paths', 'Wrap Items'], outputs: ['Item A', 'Item B'], icon: 'rtree' },
  { id: 'pl1', x: 915, y: 637, w: 61, h: 32, inputs: ['V', 'C'], outputs: ['Pl'], icon: 'poly', graft: true },
  { id: 'pl2', x: 915, y: 675, w: 61, h: 33, inputs: ['V', 'C'], outputs: ['Pl'], icon: 'poly', graft: true },
  { id: 'line', x: 915, y: 716, w: 101, h: 32, inputs: ['Start Point', 'End Point'], outputs: ['Line'], icon: 'line2', graft: true },
]
const singleWires = [
  'M445 737C460 736 452 723 443 714C432 701 415 686 431 685',
  'M421 833C440 832 434 818 413 799C393 780 342 745 377 744',
  'M421 833C452 829 430 790 436 776C439 769 444 767 452 766',
  'M519 774C538 774 548 764 546 745C544 720 540 702 546 692C551 683 559 680 570 680',
  'M532 685C550 685 552 665 570 665',
  'M782 754L793 752',
]
const doubleWires = ['M317 651H570', 'M334 855C348 855 346 844 348 834C350 822 353 818 360 818']
const dashWires = [
  'M681 654H705C780 654 820 646 914 646',
  'M684 654C697 657 692 665 685 678C677 692 657 721 681 722',
  'M754 722C810 722 842 685 914 685',
  'M754 722C774 722 768 737 793 738',
  'M897 745C908 744 898 726 914 725',
  'M897 774C912 774 901 742 914 740',
]
const hatch = ['M213 644q-4 6 0 12M210 644q-4 6 0 12M213 658q-4 6 0 12M210 658q-4 6 0 12', 'M374 724q-4 6 0 12M371 724q-4 6 0 12', 'M357 826q-4 6 0 12M354 826q-4 6 0 12']
</script>

<template>
  <div class="desktop">
    <svg class="defs" width="0" height="0" aria-hidden="true">
      <defs>
        <radialGradient id="silver" cx=".35" cy=".3" r=".8"><stop offset="0" stop-color="#fff" /><stop offset=".5" stop-color="#aaa" /><stop offset="1" stop-color="#333" /></radialGradient>
        <radialGradient id="bulbg" cx=".35" cy=".3" r=".9"><stop offset="0" stop-color="#eee" /><stop offset="1" stop-color="#8a8a8a" /></radialGradient>
        <radialGradient id="blueg" cx=".35" cy=".3" r=".8"><stop offset="0" stop-color="#dfe9ff" /><stop offset=".4" stop-color="#2e62e0" /><stop offset="1" stop-color="#04104e" /></radialGradient>
        <radialGradient id="bluel" cx=".35" cy=".3" r=".8"><stop offset="0" stop-color="#e5edff" /><stop offset="1" stop-color="#3d64d4" /></radialGradient>
        <radialGradient id="greeng" cx=".4" cy=".4" r=".7"><stop offset="0" stop-color="#c8e8b0" /><stop offset="1" stop-color="#7fa872" /></radialGradient>
        <radialGradient id="redg" cx=".35" cy=".3" r=".8"><stop offset="0" stop-color="#ff7a60" /><stop offset=".5" stop-color="#cf1708" /><stop offset="1" stop-color="#7a0800" /></radialGradient>
        <linearGradient id="helpg" x2="0" y2="1"><stop offset="0" stop-color="#7f95ee" /><stop offset="1" stop-color="#2038b8" /></linearGradient>
        <linearGradient id="orange"><stop offset="0" stop-color="#ffd98a" /><stop offset="1" stop-color="#e07a08" /></linearGradient>
        <linearGradient id="pink"><stop offset="0" stop-color="#c9c9c9" /><stop offset=".5" stop-color="#ff5fb4" /><stop offset="1" stop-color="#d4006e" /></linearGradient>
        <linearGradient id="darkg" x2="0" y2="1"><stop offset="0" stop-color="#888" /><stop offset="1" stop-color="#222" /></linearGradient>
        <linearGradient id="greenf" x2="0" y2="1"><stop offset="0" stop-color="#b5ec7a" /><stop offset="1" stop-color="#4fb01e" /></linearGradient>
        <linearGradient id="sky" x2="1" y2="1"><stop offset="0" stop-color="#c9ecff" /><stop offset="1" stop-color="#3a86d8" /></linearGradient>
        <linearGradient id="hexg" x2="0" y2="1"><stop offset="0" stop-color="#444" /><stop offset=".5" stop-color="#151515" /><stop offset="1" stop-color="#2a2a2a" /></linearGradient>
        <pattern id="dots" width="2" height="2" patternUnits="userSpaceOnUse"><rect width="1" height="1" fill="#b5b5b5" /></pattern>
      </defs>
    </svg>

    <section class="rhino">
      <header class="titlebar muted">
        <svg class="logo" viewBox="0 0 16 18"><rect width="16" height="18" fill="#0b0b0b" /><path d="M1 1L5 8L3 11L7 16L8 18H12L15 11L14 6L12 9L10 5L9 2L7 6L4 1Z" fill="#fff" /><path d="M5 10L9 9L13 11L10 15Z" fill="#777" /></svg>
        <span class="title">Bahnhof_Dach.3dm (25 KB) - Rhino 7 Not-For-Resale-Lab - [Perspektive]</span>
        <div class="winbtns">
          <button aria-label="Minimieren"><svg viewBox="0 0 12 12"><path d="M1 6H11" /></svg></button>
          <button aria-label="Maximieren"><svg viewBox="0 0 12 12"><path d="M1.500 1.500H10.500V10.500H1.500Z" /></svg></button>
          <button aria-label="Schließen"><svg viewBox="0 0 12 12"><path d="M1 1L11 11M11 1L1 11" /></svg></button>
        </div>
      </header>
      <nav class="menu"><button v-for="m in menus" :key="m">{{ m }}</button></nav>
      <div class="command">
        <div class="history">
          <div class="lines"><p>Befehl: _Open</p><p>Am Laden Vorgänger Rhino-Renderer, Version 1.50, Dec&nbsp; 8 2020, 10:54:15</p></div>
          <div class="scroll"><svg viewBox="0 0 12 28"><path d="M4 10L8 5L12 10M4 17L8 22L12 17" /></svg></div>
        </div>
        <div class="prompt">
          <label for="cmd">Befehl:</label><input id="cmd" v-model="command" type="text" />
          <div class="spin"><svg viewBox="0 0 12 18"><path d="M.5 1.500H14V8.500H.5ZM.5 9.500H14V16.500H.5Z" fill="#eee" stroke="#999" /><path d="M4 6.500H10L7 3ZM4 11.500H10L7 15Z" fill="#111" /></svg></div>
        </div>
      </div>
      <div class="rtabs" role="tablist">
        <button v-for="(t, i) in rhinoTabs" :key="t" role="tab" :class="{ on: i === 0 }">{{ t }}</button>
        <button class="more" aria-label="Weitere">»</button>
        <svg class="cog" viewBox="0 0 16 16"><circle cx="8" cy="8" r="6.500" fill="none" stroke="#888" stroke-width="2" stroke-dasharray="2.500 1.500" /><circle cx="8" cy="8" r="5" fill="#ddd" stroke="#999" /><circle cx="8" cy="8" r="1.500" fill="#555" /></svg>
      </div>
      <div class="toolbar">
        <button v-for="t in tools" :key="t.id" :class="{ fly: t.fly }" :aria-label="t.label">
          <svg viewBox="0 0 24 24" v-html="art[t.id]"></svg><span v-if="t.id === 'help'" class="qm">?</span>
        </button>
      </div>
      <div class="work">
        <div class="side one">
          <button v-for="s in sideA" :key="s" :aria-label="s"><svg viewBox="0 0 24 24" v-html="art[s]"></svg><b v-if="s === 'etabs'">ETABS</b><i v-if="s === 'seq'" class="n1">1</i><i v-if="s === 'seq'" class="n2">2</i><i v-if="s === 'seq2'" class="n3">1</i><i v-if="s === 'seq2'" class="n4">2</i></button>
        </div>
        <div class="side two">
          <button v-for="(s, i) in sideB" :key="s" :class="{ fly: i > 0 }" :aria-label="s"><svg viewBox="0 0 24 24" v-html="art[s]"></svg></button>
        </div>
        <div class="view">
          <svg class="scene" viewBox="100 166 1048 227" preserveAspectRatio="xMinYMin slice">
            <defs><clipPath id="floor"><path d="M100 166H1038L991 393H100Z" /></clipPath></defs>
            <g clip-path="url(#floor)" fill="none">
              <path :d="minor" stroke="#9299a1" />
              <path :d="major" stroke="#858890" />
            </g>
            <path d="M268 261L1029 206" stroke="#9e4747" stroke-width="2" />
            <path d="M254 166L269 258" stroke="#3f9a41" stroke-width="2" />
            <path :d="edges" fill="none" stroke="#930d0f" />
            <path d="M510 241L561 232L610 225L656 220L699 219L739 226" fill="none" stroke="#16100f" />
            <path :d="marks" fill="none" stroke="#940000" stroke-width="2" />
            <path d="M136.500 386V393" stroke="#555" /><text x="138" y="389" class="axis">Z</text>
          </svg>
          <div class="vtitle"><strong>Perspektive</strong><button aria-label="Ansichtsmenü"><svg viewBox="0 0 10 10"><path d="M1 3H9L5 8Z" fill="#222" /></svg></button></div>
        </div>
        <aside class="panel">
          <h2>Eigens..</h2>
          <div class="pair"><svg viewBox="0 0 24 24" v-html="art.matball"></svg><svg viewBox="0 0 24 24" v-html="art.brush"></svg></div>
          <div class="pair"><svg viewBox="0 0 24 24" v-html="art.open"></svg><svg viewBox="0 0 24 24" v-html="art.qpage"></svg></div>
          <div class="pair tabs"><svg viewBox="0 0 24 24" v-html="art.wheel"></svg><svg viewBox="0 0 24 24" v-html="art.layer"></svg></div>
          <div class="pbody">
            <button class="sel" aria-label="Kamera"><svg viewBox="0 0 24 24" v-html="art.camera"></svg></button>
            <button aria-label="Material"><svg viewBox="0 0 24 24" v-html="art.chain"></svg></button>
            <button aria-label="Rahmen"><svg viewBox="0 0 24 24" v-html="art.frame"></svg></button>
            <h3>Ansi</h3>
            <p>Ti</p>
            <div class="bar"><svg viewBox="0 0 10 12"><path d="M2 8L6 4L10 8" fill="none" stroke="#888" stroke-width="1.500" /></svg></div>
          </div>
        </aside>
      </div>
    </section>

    <section class="gh">
      <header class="titlebar ghtitle">
        <span class="title">Grasshopper - BH_Dach_DE_Linien*</span>
        <div class="winbtns">
          <button aria-label="Minimize"><svg viewBox="0 0 12 12"><path d="M1 6H11" /></svg></button>
          <button aria-label="Maximize"><svg viewBox="0 0 12 12"><path d="M1.500 1.500H10.500V10.500H1.500Z" /></svg></button>
          <button aria-label="Close"><svg viewBox="0 0 12 12"><path d="M1 1L11 11M11 1L1 11" /></svg></button>
        </div>
      </header>
      <nav class="ghmenu"><button v-for="m in ghMenus" :key="m">{{ m }}</button><span class="file">BH_Dach_DE_Linien</span></nav>
      <div class="ghtabs" role="tablist"><button v-for="(t, i) in ghTabs" :key="t" role="tab" :class="{ on: i === 0 }">{{ t }}</button></div>
      <div class="ribbon">
        <div v-for="r in ribbon" :key="r.name" class="rpanel">
          <div class="icons">
            <div v-for="(g, gi) in r.groups" :key="gi" class="grp">
              <button v-for="k in g" :key="k" :aria-label="k" :class="{ tile: tiled.includes(k), gold: k === 'graph' }">
                <template v-if="r.kind === 'hexa'">
                  <svg viewBox="0 0 24 24"><path d="M6 2H18L23.500 12L18 22H6L.5 12Z" fill="url(#hexg)" stroke="#000" /><path d="M7 3.500H17L22 12L17 20.500H7L2 12Z" fill="none" stroke="#666" stroke-width=".7" /><g v-if="art[k]" v-html="art[k]"></g></svg>
                  <span v-if="!art[k]" :class="{ small: k.length > 1 }">{{ k }}</span>
                </template>
                <svg v-else viewBox="0 0 24 24" v-html="art[k]"></svg>
              </button>
            </div>
          </div>
          <div class="rlabel">{{ r.name }}<svg viewBox="0 0 8 8"><path d="M4 0V7M1 3.500H7M2 5L4 7.500L6 5" fill="none" stroke="#aaa" stroke-width="1.300" /></svg></div>
        </div>
      </div>
      <div class="ghbar">
        <button aria-label="Open"><svg viewBox="0 0 24 24" v-html="art.gopen"></svg></button>
        <button class="wide" aria-label="Save"><svg viewBox="0 0 24 24" v-html="art.gsave"></svg></button>
        <span class="vsep"></span>
        <div class="combo">
          <select v-model="zoom" aria-label="Zoom"><option>72%</option><option>100%</option></select>
          <svg viewBox="0 0 10 10"><path d="M1 3L5 7L9 3" fill="none" stroke="#555" stroke-width="1.200" /></svg>
        </div>
        <button aria-label="Zoom extents"><svg viewBox="0 0 24 24" v-html="art.gext"></svg></button><span class="caret"></span>
        <button aria-label="Preview"><svg viewBox="0 0 24 24" v-html="art.eye"></svg></button><span class="caret"></span>
        <button aria-label="Sketch"><svg viewBox="0 0 24 24" v-html="art.sketch"></svg></button>
        <div class="right">
          <button aria-label="No preview"><svg viewBox="0 0 24 24" v-html="art.noview"></svg></button>
          <button aria-label="Wireframe"><svg viewBox="0 0 24 24" v-html="art.wire"></svg></button>
          <button class="active" aria-label="Shaded"><svg viewBox="0 0 24 24" v-html="art.red"></svg></button>
          <span class="vsep"></span>
          <button aria-label="Selected only"><svg viewBox="0 0 24 24" v-html="art.teal"></svg></button>
          <button aria-label="Document"><svg viewBox="0 0 24 24" v-html="art.greent"></svg></button>
          <button aria-label="Materials"><svg viewBox="0 0 24 24" v-html="art.halfb"></svg></button>
          <span class="vsep"></span>
          <button aria-label="Mesh quality"><svg viewBox="0 0 24 24" v-html="art.octa"></svg></button><span class="caret"></span>
        </div>
      </div>

      <main class="canvas">
        <div class="group red" :style="place({ x: 8, y: 577, w: 194, h: 254 })"><h1>Input</h1></div>
        <div class="group violet" :style="place({ x: 209, y: 577, w: 814, h: 322 })"><h1>Roof</h1></div>
        <svg class="wires">
          <g transform="translate(-2 -565)" fill="none" stroke-linecap="round">
            <path v-for="d in singleWires" :key="d" :d="d" stroke="#4c3f63" stroke-width="2" />
            <g v-for="d in doubleWires" :key="d"><path :d="d" stroke="#4c3f63" stroke-width="4" /><path :d="d" stroke="#a592cc" stroke-width="1" /></g>
            <g v-for="d in dashWires" :key="d"><path :d="d" stroke="#4c3f63" stroke-width="4" stroke-dasharray="7 6" /><path :d="d" stroke="#a592cc" stroke-width="1.500" stroke-dasharray="7 6" /></g>
            <path v-for="d in hatch" :key="d" :d="d" stroke="#8a79ad" stroke-width=".6" />
          </g>
        </svg>

        <div class="node param" :style="place({ x: 15, y: 649, w: 37, h: 18 })">
          <i class="port in"></i><svg viewBox="0 0 24 24"><path d="M6 2H18L23.500 12L18 22H6L.5 12Z" fill="#333" stroke="#000" /><g v-html="art.spiral"></g></svg><i class="port out"></i>
        </div>

        <div v-for="s in sliders" :key="s.name" class="node slider" :style="place({ x: s.x, y: s.y, w: s.w, h: 16 })">
          <label :for="s.name" :style="{ width: s.label + 'px' }">{{ s.name }}</label>
          <div class="track">
            <div class="ticks" :style="{ left: s.from - s.x - s.label - 1 + 'px', width: s.to - s.from + 'px' }"></div>
            <input :id="s.name" type="range" min="0" max="100" :value="((s.knob - s.from) / (s.to - s.from)) * 100" :style="{ left: s.from - s.x - s.label - 4 + 'px', width: s.to - s.from + 6 + 'px' }" />
            <output :for="s.name" :style="{ left: s.knob - s.x - s.label + 4 + 'px' }">{{ s.value }}</output>
          </div>
          <i class="port out"></i>
        </div>

        <div v-for="n in nodes" :key="n.id" class="node comp" :class="{ dark: n.dark }" :style="place(n)">
          <ul class="ins"><li v-for="p in n.inputs" :key="p"><i class="port in"></i>{{ p }}</li></ul>
          <svg viewBox="0 0 24 24" v-html="art[n.icon]"></svg>
          <ul class="outs" :class="{ grafted: n.graft }"><li v-for="p in n.outputs" :key="p">{{ p }}<svg v-if="n.graft" class="graft" viewBox="0 0 12 12"><rect x=".5" y=".5" width="11" height="11" rx="2" fill="#ddd" stroke="#333" /><path d="M6 2V9M3 6L6 9.500L9 6M3.500 4V6M8.500 4V6" fill="none" stroke="#333" /></svg><i class="port out"></i></li></ul>
        </div>

        <div class="node note" :style="place({ x: 216, y: 819, w: 116, h: 72 })">
          <i class="port in"></i><header>{0}</header>
          <p v-for="(v, i) in ['3', '6', '9', '12', '15']" :key="v"><span>{{ i }}</span>{{ v }}</p><i class="port out"></i>
        </div>
        <div class="node note" :style="place({ x: 654, y: 740, w: 126, h: 28 })">
          <i class="port in"></i><header>{0}</header><p><span>0</span>{0;0;+1}[1]</p><i class="port out"></i>
        </div>
      </main>
    </section>
  </div>
</template>

<style>
html, body { height: 100%; overflow: hidden; }
body { margin: 0; }
</style>

<style scoped>
* { box-sizing: border-box; }
.desktop { height: 100vh; display: flex; flex-direction: column; font: 12px/16px Roboto, "Open Sans", sans-serif; color: #111; background: #eaebef; overflow: hidden; }
.defs { position: absolute; }
button { font: inherit; color: inherit; background: none; border: 0; padding: 0; margin: 0; white-space: nowrap; flex: none; }
h1, h2, h3, p, ul { margin: 0; padding: 0; font-weight: 400; list-style: none; }
svg { display: block; flex: none; }

.rhino { border-top: 1px solid #2b2630; border-left: 1px solid #2b2630; border-bottom: 1px solid #77777b; background: #eaebef; }
.titlebar { display: flex; align-items: center; height: 28px; background: #fff; padding-left: 8px; }
.titlebar.muted { color: #8c8c8c; }
.logo { width: 16px; height: 18px; margin-right: 5px; }
.title { flex: 1; white-space: nowrap; }
.winbtns { display: flex; color: #111; }
.muted .winbtns { color: #8c8c8c; }
.winbtns button { width: 46px; display: grid; place-items: center; }
.winbtns button:last-child { margin-right: -6px; }
.winbtns svg { width: 12px; height: 12px; fill: none; stroke: currentColor; }
.menu { display: flex; gap: 13px; height: 21px; background: #fff; padding: 3px 0 0 7px; color: #6b6b6b; }

.command { margin: 4px 0 0 7px; height: 48px; background: #fff; border-left: 1px solid #c3c9df; }
.history { display: flex; height: 28px; color: #222; }
.lines { flex: 1; }
.lines p { height: 14px; line-height: 14px; }
.scroll { width: 11px; background: #f0f0f0; }
.scroll svg { width: 12px; height: 28px; fill: none; stroke: #555; stroke-width: 2; }
.prompt { display: flex; height: 19px; border-top: 1px solid #b9c1dc; align-items: center; }
.prompt label { font-weight: 700; color: #222; }
.prompt input { flex: 1; border: 0; outline: 0; font: inherit; height: 16px; }
.spin svg { width: 10px; height: 18px; }
.rtabs { display: flex; align-items: stretch; height: 22px; margin: 2px 0 0 4px; padding: 4px 0 0 3px; border-top: 1px solid #c9cfe4; border-bottom: 1px solid #c0c6df; color: #3a3a45; overflow: hidden; }
.rtabs button { padding: 0 10px; line-height: 18px; }
.rtabs .on { border: 1px solid #c0c6df; border-bottom: 0; border-radius: 6px 3px 0 0; line-height: 16px; padding: 0 9px; }
.rtabs .more { margin-left: auto; border: 1px solid #c0c6df; border-width: 1px 0 0 1px; padding: 0 3px 0 4px; font-size: 15px; line-height: 12px; }
.cog { width: 16px; height: 16px; margin-right: -6px; }
.toolbar { display: flex; height: 31px; padding-left: 7px; overflow: hidden; }
.toolbar button, .side button { position: relative; width: 28px; height: 31px; display: grid; place-items: center; }
.toolbar svg { width: 23px; height: 23px; }
.fly::after { content: ""; position: absolute; right: 0; bottom: 4px; border: 3px solid; border-color: transparent #666 #666 transparent; }
.qm { position: absolute; inset: 0; text-align: center; color: #fff; font: 700 18px/30px "Liberation Serif", serif; }

.work { display: flex; height: 236px; padding-top: 8px; overflow: hidden; }
.side { display: flex; flex-wrap: wrap; align-content: flex-start; border-top: 3px double #c3cde6; margin-top: 3px; flex: none; height: 228px; overflow: hidden; padding-top: 1px; }
.side.one { width: 26px; margin-left: 2px; box-shadow: 3px 0 0 -1px #c3cde6; }
.side.two { width: 57px; margin-left: 7px; }
.side button { height: 28px; width: 28px; }
.side.one button { width: 26px; }
.side svg { width: 22px; height: 22px; }
.side .fly::after { bottom: 1px; }
.side b { position: absolute; inset: 0; text-align: center; font: 900 7px/28px Lato, sans-serif; color: #14355f; }
.side i { position: absolute; font: 700 8px/8px "Open Sans", sans-serif; color: #fff; }
.n1 { left: 15px; top: 4px; } .n2 { left: 5px; top: 8px; } .n3 { left: 15px; top: 5px; } .n4 { left: 7px; top: 17px; }
.view { position: relative; flex: 1; margin-left: 7px; background: #9ca3aa; border-right: 1px solid #b9c4dd; border-top: 1px solid #b9c4dd; overflow: hidden; }
.scene { width: 100%; height: 100%; }
.axis { font: 11px "Liberation Sans", sans-serif; fill: #666; }
.vtitle { position: absolute; left: 0; top: 0; height: 18px; display: flex; align-items: center; gap: 8px; padding-left: 9px; background: #849aec; color: #23284a; }
.vtitle strong { font: 700 11px/16px "Noto Sans", "Open Sans", sans-serif; }
.vtitle button { border-left: 1px solid #333; height: 14px; width: 12px; display: grid; place-items: center; }
.vtitle svg { width: 10px; height: 10px; }

.panel { width: 51px; padding: 2px 0 0 7px; color: #444; overflow: hidden; flex: none; }
.panel h2 { font-size: 12px; line-height: 16px; padding-left: 3px; white-space: nowrap; }
.pair { display: flex; gap: 4px; height: 24px; align-items: center; padding-left: 3px; }
.pair svg { width: 16px; height: 16px; }
.pair.tabs { height: 22px; border: 1px solid #b9c4dd; border-width: 1px 0 0 1px; padding-left: 2px; }
.pbody { position: relative; border-left: 1px solid #b9c4dd; height: 150px; padding: 2px 0 0 6px; }
.pbody button { width: 28px; height: 28px; display: grid; place-items: center; margin-bottom: 4px; }
.pbody button svg { width: 22px; height: 22px; }
.pbody .sel { background: #a9b9ee; }
.pbody h3 { font-size: 14px; line-height: 20px; margin-top: 10px; padding-left: 1px; border-bottom: 1px solid #dcdde2; width: 28px; }
.pbody p { line-height: 18px; padding-left: 20px; }
.bar { position: absolute; right: 0; top: 100px; width: 9px; height: 40px; background: linear-gradient(#f0f0f0 14px, #cdcdcd 14px 28px, #f0f0f0 28px); }
.bar svg { width: 9px; height: 12px; }

.gh { flex: 1; min-height: 0; display: flex; flex-direction: column; background: #f0f0f0; border-left: 2px solid #2b2630; }
.ghtitle { height: 30px; padding-left: 7px; flex: none; }
.ghmenu { display: flex; height: 27px; flex: none; align-items: center; gap: 18px; padding: 0 4px 0 12px; background: linear-gradient(90deg, #f0f0f0, #fdfdfd); color: #000; }
.file { margin-left: auto; }
.ghtabs { display: flex; height: 23px; flex: none; border-bottom: 1px solid #a6a6a6; color: #777; font-size: 11px; }
.ghtabs button { padding: 2px 9px 0; height: 22px; }
.ghtabs .on { background: linear-gradient(#fff, #e4e4e4); color: #000; border: 1px solid #9a9a9a; border-bottom: 0; border-left: 0; border-radius: 7px 7px 0 0; padding: 0 8px 2px 7px; height: 23px; }
.ribbon { display: flex; align-items: flex-start; gap: 3px; height: 58px; flex: none; padding: 3px 0 0 2px; background: linear-gradient(#d6d6d6, #f0f0f0); }
.rpanel { border: 1px solid #777; border-radius: 4px; background: linear-gradient(#d9d9d9, #f4f4f4); overflow: hidden; height: 44px; }
.icons { display: flex; height: 29px; padding: 0 2px 0 1px; }
.grp { display: flex; align-items: center; }
.grp + .grp { border-left: 1px solid #b5b5b5; margin-left: 4px; padding-left: 5px; }
.grp button { position: relative; width: 28px; height: 28px; display: grid; place-items: center; }
.grp button svg { width: 24px; height: 24px; }
.grp .tile svg { border: 1px solid #111; border-radius: 3px; background: linear-gradient(135deg, #777, #eee 60%, #888); }
.grp .gold svg { background: linear-gradient(#f3b61c, #ffd94c); }
.grp span { position: absolute; inset: 0; text-align: center; color: #fff; font: 700 18px/28px "Liberation Serif", serif; }
.grp .small { font-size: 14px; }
.rlabel { position: relative; height: 14px; background: #222; color: #fff; text-align: center; font-size: 11px; line-height: 13px; padding-right: 12px; }
.rlabel svg { position: absolute; right: 2px; top: 3px; width: 8px; height: 8px; }
.ghbar { display: flex; align-items: center; height: 33px; flex: none; border-top: 2px solid #777; border-left: 1px solid #777; background: linear-gradient(#fdfdfd, #f0f0f0); }
.ghbar button { width: 28px; height: 28px; display: grid; place-items: center; }
.ghbar button svg { width: 22px; height: 22px; }
.ghbar .wide { width: 32px; }
.ghbar .active { border: 1px solid #1e78d2; }
.vsep { width: 1px; height: 22px; background: #bbb; margin: 0 4px 0 3px; }
.combo { position: relative; width: 136px; margin-right: 4px; }
.combo select { display: block; appearance: none; width: 100%; height: 23px; font: inherit; border: 1px solid #7a7a7a; border-radius: 0; background: #fff; padding: 0 0 0 2px; color: #000; }
.combo svg { position: absolute; right: 3px; top: 7px; width: 10px; height: 10px; }
.caret { border: 3px solid transparent; border-top-color: #111; border-bottom: 0; margin: 0 4px 0 3px; }
.right { margin-left: auto; display: flex; align-items: center; margin-right: -3px; }
.right .vsep { margin: 0 7px 0 9px; }
.right .vsep ~ button + .vsep { margin: 0 1px 0 4px; }
.right .caret { margin: 0 1px; }

.canvas { position: relative; flex: 1; min-height: 0; overflow: hidden; border-left: 1px solid #777; background: #d4d0c8; font: 8px/10px "Open Sans", sans-serif; color: #2c2c2c; }
.canvas::after { content: ""; position: absolute; inset: -27px 0 0 -14px; z-index: 1; pointer-events: none; background: repeating-linear-gradient(90deg, #0000 0 107px, #0000001c 107px 108px), repeating-linear-gradient(#0000 0 35px, #0000001c 35px 36px); }
.group { position: absolute; margin-left: -1px; }
.group h1 { text-align: center; font: 500 19px/34px Roboto, sans-serif; color: #000; }
.red { background: #f05652; border: 1px solid #c46560; }
.red h1 { padding-right: 57px; }
.violet { background: #bba5e9; border: 1px solid #9d90bb; }
.violet h1 { padding-left: 142px; }
.wires { position: absolute; left: -1px; top: 0; width: 100%; height: 100%; z-index: 2; overflow: visible; }
.node { position: absolute; z-index: 3; margin-left: -1px; border: 1px solid #333; border-radius: 3px; background: linear-gradient(#e9e9e9, #c2c2c2); box-shadow: 0 1px 1px #0004; display: flex; align-items: stretch; white-space: nowrap; }
.node.dark { background: linear-gradient(#a2a2ae, #858593); }
.port { position: absolute; top: 50%; width: 5px; height: 6px; margin-top: -3px; background: #fff; border: 1px solid #111; }
.port.in { left: -5px; border-right: 0; border-radius: 4px 0 0 4px; }
.port.out { right: -5px; border-left: 0; border-radius: 0 4px 4px 0; }
.param { justify-content: center; align-items: center; }
.param > svg { width: 17px; height: 17px; }
.slider label { background: linear-gradient(#a2a2ae, #858593); border-right: 1px solid #333; border-radius: 2px 0 0 2px; line-height: 12px; text-align: center; flex: none; }
.track { position: relative; flex: 1; }
.ticks { position: absolute; top: 4px; height: 4px; border-bottom: 1px solid #aaa; border-right: 1px solid #aaa; background: repeating-linear-gradient(90deg, #b5b5b5 0 1px, #0000 1px 12px); }
.track input { position: absolute; top: 0; height: 14px; margin: 0; appearance: none; background: none; }
.track input::-webkit-slider-thumb { appearance: none; width: 5px; height: 5px; border: 1px solid #111; background: #fff; transform: rotate(45deg); }
.track output { position: absolute; top: 1px; line-height: 10px; background: #d9d9d9; padding: 0 1px; }
.comp { padding: 0 0 2px; justify-content: space-between; align-items: center; }
.comp ul { display: flex; flex-direction: column; justify-content: space-around; align-self: stretch; }
.comp li { position: relative; display: flex; align-items: center; flex: 1; }
.ins li { justify-content: flex-end; padding-left: 4px; }
.outs li { padding-right: 7px; gap: 4px; }
.outs.grafted li { padding-right: 2px; }
.comp > svg { width: 15px; height: 15px; }
.graft { width: 11px; height: 11px; }
.note { flex-direction: column; background: #fffb57; font: 8px/12px "DejaVu Sans Mono", monospace; color: #84822f; }
.note header { background: #e2db4d; text-align: right; padding-right: 9px; height: 12px; line-height: 10px; flex: none; border-radius: 2px 2px 0 0; }
.note p { display: flex; align-items: stretch; flex: 1; min-height: 0; line-height: 12px; }
.note p:nth-of-type(even) { background: #f4ee52; }
.note p span { width: 10px; padding-left: 2px; border-right: 1px solid #c9c34a; margin-right: 2px; }
</style>
